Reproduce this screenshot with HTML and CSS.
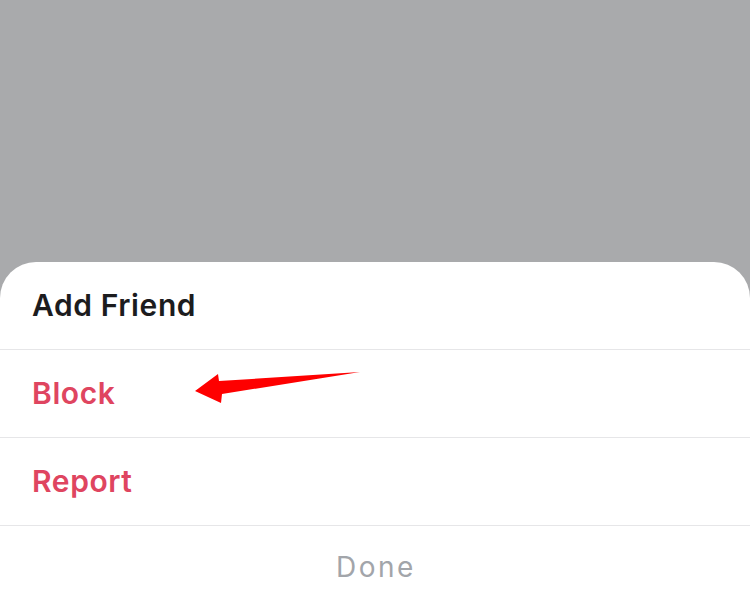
FILE: index.html
```html
<!DOCTYPE html>
<html>
<head>
<meta charset="utf-8">
<link rel="stylesheet" href="styles.css">
</head>
<body>
<div class="screen">
  <div class="backdrop"></div>
  <div class="sheet">
    <div class="row">Add Friend</div>
    <div class="row danger">Block</div>
    <div class="row danger">Report</div>
    <div class="row done">Done</div>
  </div>
  <svg class="arrow" width="750" height="614" viewBox="0 0 750 614">
    <polygon points="195,391 218,374 219,381 360,372 222,394 221,403" fill="#fe0000"/>
  </svg>
</div>
</body>
</html>
```
FILE: styles.css
```css
html, body {
  margin: 0;
  padding: 0;
}
body {
  background: #a9aaac;
  font-family: Inter, "Noto Sans", sans-serif;
}
.screen {
  position: relative;
  width: 750px;
  height: 614px;
  display: flex;
  flex-direction: column;
  overflow: hidden;
}
.backdrop {
  height: 262px;
  flex: none;
}
.sheet {
  flex: 1;
  background: #ffffff;
  border-radius: 36px 36px 0 0;
  display: flex;
  flex-direction: column;
}
.row {
  box-sizing: border-box;
  height: 88px;
  display: flex;
  align-items: center;
  padding-left: 32px;
  padding-bottom: 2px;
  font-size: 30px;
  font-weight: 600;
  letter-spacing: 0.6px;
  color: #1c1c1e;
  border-bottom: 1px solid #e6e6e8;
}
.row.danger {
  color: #df4560;
}
.row.done {
  border-bottom: none;
  justify-content: center;
  padding-left: 2px;
  padding-bottom: 6px;
  font-weight: 400;
  font-size: 28px;
  letter-spacing: 2.5px;
  color: #a2a5aa;
}
.arrow {
  position: absolute;
  left: 0;
  top: 0;
  pointer-events: none;
}
```
